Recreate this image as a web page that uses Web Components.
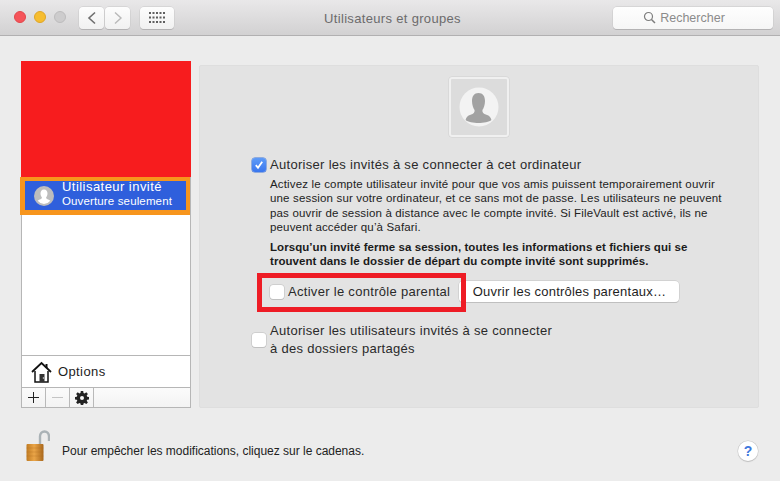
<!DOCTYPE html>
<html lang="fr">
<head>
<meta charset="utf-8">
<title>Utilisateurs et groupes</title>
<style>
  html, body { margin: 0; padding: 0; }
  body { width: 780px; height: 481px; overflow: hidden; font-family: "Liberation Sans", Arial, sans-serif; color: #222; background: #ececec; }
</style>
</head>
<body>
<prefs-window>
  <prefs-toolbar slot="top" title="Utilisateurs et groupes"></prefs-toolbar>
  <user-list slot="side"></user-list>
  <guest-panel slot="main"></guest-panel>
  <prefs-footer slot="bottom"></prefs-footer>
</prefs-window>

<script>
class PrefsWindow extends HTMLElement {
  constructor() {
    super();
    this.attachShadow({ mode: 'open' });
    this.shadowRoot.innerHTML = `
      <style>
        :host { display: flex; flex-direction: column; width: 780px; height: 481px; background: #ececec; }
        .content { display: flex; gap: 8px; padding: 25px 21px 0 21px; height: 347px; align-items: flex-start; }
      </style>
      <slot name="top"></slot>
      <div class="content">
        <slot name="side"></slot>
        <slot name="main"></slot>
      </div>
      <slot name="bottom"></slot>
    `;
  }
}

class PrefsToolbar extends HTMLElement {
  constructor() {
    super();
    this.attachShadow({ mode: 'open' });
    this.shadowRoot.innerHTML = `
      <style>
        :host { display: flex; align-items: center; height: 35px; box-sizing: content-box; position: relative;
          background: linear-gradient(#e9e8e9, #d2d1d2); border-bottom: 1px solid #b1b0b1; }
        .lights { display: flex; gap: 8px; margin-left: 14px; margin-top: -1px; }
        .lights i { width: 12px; height: 12px; border-radius: 50%; box-sizing: border-box; }
        .red { background: #f5545a; border: 1px solid #e2464b; }
        .yellow { background: #f6bd30; border: 1px solid #dfa527; }
        .grey { background: #cdcccd; border: 1px solid #bdbcbd; }
        .btn { display: flex; align-items: center; justify-content: center; height: 22px; box-sizing: border-box;
          background: linear-gradient(#fdfdfd, #f1f1f1); border-radius: 4px; box-shadow: 0 1px 0 #b4b3b4, 0 0 0 .5px #c8c7c8; }
        .nav { display: flex; gap: 1px; margin-left: 13px; }
        .nav .btn { width: 25px; }
        .grid { width: 34px; margin-left: 10px; }
        h1 { position: absolute; left: 0; right: 0; top: 0; height: 36px; margin: 0; font: 400 13px/37px "Liberation Sans", Arial, sans-serif;
          color: #6c6b6c; text-align: center; pointer-events: none; letter-spacing: .025em; padding-left: 5px; box-sizing: border-box; }
        .search { margin-left: auto; margin-right: 7px; width: 160px; height: 22px; display: flex; align-items: center; justify-content: center; gap: 4px;
          background: linear-gradient(#fefefe, #f6f6f6); border-radius: 4px; box-shadow: 0 1px 0 #b4b3b4, 0 0 0 .5px #c8c7c8;
          font-size: 12.500px; color: #8b8b8b; box-sizing: border-box; padding-right: 18px; }
      </style>
      <div class="lights"><i class="red"></i><i class="yellow"></i><i class="grey"></i></div>
      <div class="nav">
        <div class="btn"><svg width="10" height="14" viewBox="0 0 10 14"><path d="M8 1.500 2 7l6 5.500" fill="none" stroke="#6f6f6f" stroke-width="1.600"/></svg></div>
        <div class="btn"><svg width="10" height="14" viewBox="0 0 10 14"><path d="M2 1.500 8 7l-6 5.500" fill="none" stroke="#b9b9b9" stroke-width="1.400"/></svg></div>
      </div>
      <div class="btn grid">
        <svg width="16" height="12" viewBox="0 0 16 12" fill="#5f5f5f">
          <rect x="0" y="0" width="2" height="2"/><rect x="3.500" y="0" width="2" height="2"/><rect x="7" y="0" width="2" height="2"/><rect x="10.500" y="0" width="2" height="2"/><rect x="14" y="0" width="2" height="2"/>
          <rect x="0" y="4.500" width="2" height="2"/><rect x="3.500" y="4.500" width="2" height="2"/><rect x="7" y="4.500" width="2" height="2"/><rect x="10.500" y="4.500" width="2" height="2"/><rect x="14" y="4.500" width="2" height="2"/>
          <rect x="0" y="9" width="2" height="2"/><rect x="3.500" y="9" width="2" height="2"/><rect x="7" y="9" width="2" height="2"/><rect x="10.500" y="9" width="2" height="2"/><rect x="14" y="9" width="2" height="2"/>
        </svg>
      </div>
      <h1>${this.getAttribute('title')}</h1>
      <div class="search">
        <svg width="13" height="13" viewBox="0 0 13 13" fill="none" stroke="#7d7d7d" stroke-width="1.200"><circle cx="5.500" cy="5.500" r="4"/><path d="m8.500 8.500 3.500 3.500" stroke-width="1.500"/></svg>
        <span>Rechercher</span>
      </div>
    `;
  }
}

class UserList extends HTMLElement {
  constructor() {
    super();
    this.attachShadow({ mode: 'open' });
    this.shadowRoot.innerHTML = `
      <style>
        :host { display: flex; flex-direction: column; flex: 0 0 170px; width: 170px; height: 347px; box-sizing: border-box;
          background: #fff; border: 1px solid #b6b6b6; border-top: 0; }
        .redact { height: 116px; margin: 0 -1px; background: #f71c1e; }
        .sel { display: flex; align-items: center; height: 38px; box-sizing: border-box; margin: 0 0 0 -2px;
          background: #2f5fdc; border: solid #f7951d; border-width: 4px 4px 5px 5px; color: #fff; }
        .sel svg { flex: none; margin-left: 9px; }
        .names { margin-left: 8px; margin-top: -3px; white-space: nowrap; }
        .n1 { font-size: 13px; line-height: 15px; letter-spacing: .035em; }
        .n2 { font-size: 11.500px; line-height: 15px; letter-spacing: .012em; }
        .spacer { flex: 1; }
        .opts { display: flex; align-items: center; height: 31px; border-top: 1px solid #b6b6b6; font-size: 13px; color: #1d1d1d; letter-spacing: .03em; }
        .opts svg { margin-left: 9px; margin-right: 6px; }
        .tools { display: flex; height: 19px; border-top: 1px solid #b6b6b6; background: linear-gradient(#fbfbfb, #f3f3f3); }
        .tools div { width: 23px; border-right: 1px solid #b9b9b9; display: flex; align-items: center; justify-content: center; }
      </style>
      <div class="redact"></div>
      <div class="sel">
        <svg width="20" height="20" viewBox="0 0 20 20">
          <circle cx="10" cy="10" r="10" fill="#bdbdbd"/>
          <path d="M10 3.500c2.400 0 3.500 1.900 3.500 4 0 2-1 3.400-1.500 4.200 0 1 2.500 1.700 4.300 3A9 9 0 0 1 10 18a9 9 0 0 1-6.300-3.300c1.800-1.300 4.300-2 4.300-3-.5-.8-1.500-2.200-1.500-4.200 0-2.100 1.100-4 3.500-4z" fill="#fff"/>
        </svg>
        <div class="names"><div class="n1">Utilisateur invité</div><div class="n2">Ouverture seulement</div></div>
      </div>
      <div class="spacer"></div>
      <div class="opts">
        <svg width="21" height="22" viewBox="0 0 21 22">
          <path d="M1 11 10.500 2 20 11" fill="none" stroke="#111" stroke-width="1.800"/>
          <path d="M15.500 3v4" stroke="#111" stroke-width="2"/>
          <path d="M4 10v11h13V10" fill="#fff" stroke="#111" stroke-width="1.500"/>
          <rect x="8.500" y="13" width="5" height="8" fill="#333"/>
          <circle cx="12.400" cy="17" r=".7" fill="#ddd"/>
        </svg>
        <span>Options</span>
      </div>
      <div class="tools">
        <div><svg width="11" height="11" viewBox="0 0 11 11"><path d="M5.500 0v11M0 5.500h11" stroke="#222" stroke-width="1"/></svg></div>
        <div><svg width="11" height="11" viewBox="0 0 11 11"><path d="M0 5.500h11" stroke="#c4c4c4" stroke-width="1"/></svg></div>
        <div><svg width="14" height="14" viewBox="0 0 14 14">
          <path fill="#222" fill-rule="evenodd" d="M5.800 0h2.400l.3 2 1.100.5L11.300 1.300l1.600 1.600-1.200 1.700.5 1.100 1.800.3v2.400l-1.800.3-.5 1.100 1.200 1.700-1.600 1.600-1.700-1.200-1.100.5-.3 1.800H5.800l-.3-1.800-1.100-.5-1.700 1.200-1.600-1.600 1.200-1.700-.5-1.100L0 8.400V6l1.800-.3.500-1.100L1.100 2.900l1.600-1.600 1.700 1.200 1.100-.5zM7 5a2 2 0 1 0 0 4 2 2 0 0 0 0-4z"/>
        </svg></div>
      </div>
    `;
  }
}

class CheckRow extends HTMLElement {
  constructor() {
    super();
    this.attachShadow({ mode: 'open' });
    const on = this.hasAttribute('checked');
    this.shadowRoot.innerHTML = `
      <style>
        :host { display: flex; align-items: center; gap: 4px; font-size: 13px; line-height: 18px; color: #2a2a2a; letter-spacing: .3px; white-space: nowrap; }
        .box { flex: none; width: 14px; height: 14px; box-sizing: border-box; border-radius: 3px; display: flex; align-items: center; justify-content: center;
          background: #fff; box-shadow: 0 0 0 .5px #bcbcbc, 0 1px 0 #c4c4c4; }
        .box.on { background: linear-gradient(#5e9bf7, #3a76ee); box-shadow: 0 0 0 .5px #3f74d8; }
      </style>
      <span class="box ${on ? 'on' : ''}">${on ? '<svg width="10" height="10" viewBox="0 0 10 10"><path d="M1.800 5.200 4 7.800 8.200 1.800" fill="none" stroke="#fff" stroke-width="1.800"/></svg>' : ''}</span>
      <span><slot></slot></span>
    `;
  }
}

class GuestPanel extends HTMLElement {
  constructor() {
    super();
    this.attachShadow({ mode: 'open' });
    this.shadowRoot.innerHTML = `
      <style>
        :host { display: block; flex: 0 0 560px; width: 560px; height: 343px; margin-top: 4px; box-sizing: border-box; position: relative;
          background: #e3e3e3; border: 1px solid #dedede; border-radius: 2px; padding: 11px 0 0 52px; }
        .avatar { width: 60px; height: 60px; box-sizing: border-box; margin-left: 197px; border: 2px solid #f0f0f0; border-radius: 3px; background: #dcdcdc;
          display: flex; align-items: center; justify-content: center; box-shadow: 0 0 0 .5px #cfcfcf; }
        .first { margin-top: 19px; }
        .desc { margin: 3px 0 0 18px; font-size: 11.500px; line-height: 14.400px; color: #222; letter-spacing: .16px; white-space: nowrap; }
        .warn { margin: 5px 0 0 18px; font-size: 11.500px; line-height: 14.400px; font-weight: 700; color: #1b1b1b; white-space: nowrap; letter-spacing: .06px; }
        .parent { display: flex; align-items: center; margin: 13px 0 0 18px; }
        .parent check-row { width: 189px; }
        .open { font: inherit; font-size: 13px; height: 21px; width: 220px; padding: 0 0 0 1px; box-sizing: border-box; border: 0; border-radius: 4px; background: #fff; color: #1e1e1e;
          box-shadow: 0 0 0 .5px #c2c2c2, 0 1px 0 #bcbcbc; letter-spacing: .23px; }
        .last { margin-top: 20px; line-height: 18px; }
        .mark { position: absolute; left: 57px; top: 207px; width: 209px; height: 39px; box-sizing: border-box; border: 5px solid #ee1c25; pointer-events: none; }
      </style>
      <div class="avatar">
        <svg width="40" height="40" viewBox="0 0 40 40">
          <circle cx="20" cy="20" r="19.500" fill="#f3f3f3"/>
          <path d="M19.500 6c4.300 0 6.500 3.200 6.500 8 0 4-1.300 7.200-2.600 9-.2 2.800 1 3.700 4 4.800 3 1 4.500 2.500 5 5.200-2 1.800-8 3-12.900 3s-10.900-1.200-12.900-3c.5-2.700 2-4.200 5-5.200 3-1.100 4.200-2 4-4.800-1.300-1.800-2.600-5-2.600-9 0-4.800 2.200-8 6.500-8z" fill="#a2a2a2"/>
        </svg>
      </div>
      <check-row class="first" checked>Autoriser les invités à se connecter à cet ordinateur</check-row>
      <div class="desc">Activez le compte utilisateur invité pour que vos amis puissent temporairement ouvrir<br>une session sur votre ordinateur, et ce sans mot de passe. Les utilisateurs ne peuvent<br>pas ouvrir de session à distance avec le compte invité. Si FileVault est activé, ils ne<br>peuvent accéder qu’à Safari.</div>
      <div class="warn">Lorsqu’un invité ferme sa session, toutes les informations et fichiers qui se<br>trouvent dans le dossier de départ du compte invité sont supprimés.</div>
      <div class="parent">
        <check-row>Activer le contrôle parental</check-row>
        <button class="open">Ouvrir les contrôles parentaux…</button>
      </div>
      <check-row class="last">Autoriser les utilisateurs invités à se connecter<br>à des dossiers partagés</check-row>
      <div class="mark"></div>
    `;
  }
}

class PrefsFooter extends HTMLElement {
  constructor() {
    super();
    this.attachShadow({ mode: 'open' });
    this.shadowRoot.innerHTML = `
      <style>
        :host { display: flex; align-items: center; height: 73px; font-size: 12px; color: #222; padding: 0 22px 0 26px; box-sizing: border-box; }
        svg.lock { flex: none; margin-top: 2px; }
        span { margin-left: 12px; margin-top: 13px; letter-spacing: -.01px; }
        .help { margin-left: auto; margin-top: 13px; width: 20px; height: 20px; border-radius: 50%; background: #fff; box-sizing: border-box; box-shadow: 0 0 0 .5px #c6c6c6, 0 1px 1px #bdbdbd;
          display: flex; align-items: center; justify-content: center; color: #3f78dd; font-weight: 700; font-size: 14px; }
      </style>
      <svg class="lock" width="24" height="32" viewBox="0 0 24 32">
        <defs><linearGradient id="brass" x1="0" x2="1" y1="0" y2="0"><stop offset="0" stop-color="#c07b22"/><stop offset=".45" stop-color="#eaa548"/><stop offset="1" stop-color="#a9681c"/></linearGradient></defs>
        <path d="M14 14V6.500C14 3.500 16 1.500 18.500 1.500S23 3.500 23 6.500V11" fill="none" stroke="#aab2b6" stroke-width="2.400"/>
        <rect x="0.500" y="14" width="17" height="17" rx="1" fill="url(#brass)"/>
        <path d="M0.500 18h17M0.500 22h17M0.500 26h17" stroke="#b06f20" stroke-width=".5" opacity=".6"/>
      </svg>
      <span>Pour empêcher les modifications, cliquez sur le cadenas.</span>
      <div class="help">?</div>
    `;
  }
}

customElements.define('prefs-window', PrefsWindow);
customElements.define('prefs-toolbar', PrefsToolbar);
customElements.define('user-list', UserList);
customElements.define('check-row', CheckRow);
customElements.define('guest-panel', GuestPanel);
customElements.define('prefs-footer', PrefsFooter);
</script>
</body>
</html>
